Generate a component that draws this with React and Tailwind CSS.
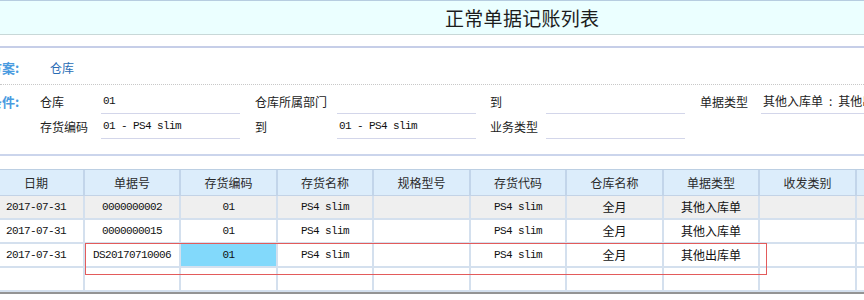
import React from "react";

const cols = [96, 96, 97, 96, 97, 96, 97, 96, 97, 70];
const headers = ["日期", "单据号", "存货编码", "存货名称", "规格型号", "存货代码", "仓库名称", "单据类型", "收发类别", ""];
const rows = [
  { bg: "bg-[#efefef]", cells: ["2017-07-31", "0000000002", "01", "PS4 slim", "", "PS4 slim", "全月", "其他入库单", "", ""] },
  { bg: "bg-white", cells: ["2017-07-31", "0000000015", "01", "PS4 slim", "", "PS4 slim", "全月", "其他入库单", "", ""] },
  { bg: "bg-white", cells: ["2017-07-31", "DS20170710006", "01", "PS4 slim", "", "PS4 slim", "全月", "其他出库单", "", ""], hl: 2 },
  { bg: "bg-white", cells: ["", "", "", "", "", "", "", "", "", ""] },
];
const cjkCols = [6, 7];

const mono = { fontFamily: "'Liberation Mono', 'Noto Sans CJK SC', monospace" };

function Label({ w, children }) {
  return (
    <div className="shrink-0 flex items-center text-[12px] text-[#222] whitespace-nowrap" style={{ width: w }}>
      {children}
    </div>
  );
}

function Input({ w, children }) {
  return (
    <div className="shrink-0 flex items-center h-full border-b border-[#d3d6ea] pl-[2px] text-[11px] tracking-[-0.6px] text-[#111] whitespace-nowrap overflow-hidden" style={{ width: w, ...mono }}>
      {children}
    </div>
  );
}

export default function App() {
  return (
    <div className="relative w-[864px] h-[300px] overflow-hidden bg-white" style={{ fontFamily: "'Noto Sans CJK SC', 'Noto Sans', sans-serif" }}>
      {/* title band */}
      <div className="h-[35px] border-t border-[#b6cde0] border-b border-b-[#c8d8d8] bg-[#ebffff] flex items-center pl-[445px]">
        <span className="text-[19px] leading-none text-[#1c1c1c] tracking-[0.3px]">正常单据记账列表</span>
      </div>
      <div className="h-[11px]" />
      <div className="h-[2px] bg-[#c6cee8]" />

      {/* form */}
      <div className="pt-[12px]">
        <div className="flex items-center h-[16px]">
          <div className="shrink-0 ml-[-11px] w-[61px] text-[13px] font-bold text-[#4a9be0] whitespace-nowrap">方案:</div>
          <div className="shrink-0 text-[12px] text-[#2a6db5] whitespace-nowrap">仓库</div>
        </div>
        <div className="mt-[8px] border-t border-dotted border-[#c8c8c8]" />
        <div className="mt-[4px] flex h-[25px] whitespace-nowrap">
          <div className="shrink-0 ml-[-11px] w-[51px] flex items-center text-[13px] font-bold text-[#4a9be0]">条件:</div>
          <Label w={61}>仓库</Label>
          <Input w={139}>01</Input>
          <div className="shrink-0 w-[15px]" />
          <Label w={82}>仓库所属部门</Label>
          <Input w={139}></Input>
          <div className="shrink-0 w-[14px]" />
          <Label w={56}>到</Label>
          <Input w={139}></Input>
          <div className="shrink-0 w-[15px]" />
          <Label w={61}>单据类型</Label>
          <div className="shrink-0 flex items-center h-full border-b border-[#d3d6ea] pl-[2px] text-[12px] text-[#222] whitespace-nowrap w-[139px] overflow-hidden">
            <span>其他入库单</span>
            <span className="mx-[6px]">:</span>
            <span>其他出库单</span>
          </div>
        </div>
        <div className="flex h-[25px] whitespace-nowrap">
          <div className="shrink-0 w-[40px]" />
          <Label w={61}>存货编码</Label>
          <Input w={139}>01 - PS4 slim</Input>
          <div className="shrink-0 w-[15px]" />
          <Label w={82}>到</Label>
          <Input w={139}>01 - PS4 slim</Input>
          <div className="shrink-0 w-[14px]" />
          <Label w={56}>业务类型</Label>
          <Input w={139}></Input>
        </div>
        <div className="mt-[15px] h-[2px] bg-[#cbd5ec]" />
      </div>

      <div className="h-[13px]" />

      {/* table */}
      <div className="ml-[-11px] w-[960px]">
        <div className="flex h-[27px] bg-[#dcedfb] border-t border-[#bccfe3] border-b border-b-[#c3d3e6]">
          {headers.map((h, i) => (
            <div key={i} className="shrink-0 flex items-center justify-center border-r-2 border-[#c2d5ea] text-[12px] text-[#2a2a2a] whitespace-nowrap" style={{ width: cols[i] }}>
              {h}
            </div>
          ))}
        </div>
        {rows.map((r, ri) => (
          <div key={ri} className={`flex h-[24px] border-b-2 border-[#d4e0ee] ${r.bg}`}>
            {r.cells.map((c, ci) => (
              <div
                key={ci}
                className={`shrink-0 flex items-center justify-center border-r-2 border-[#d4e0ee] whitespace-nowrap text-[#111] ${r.hl === ci ? "bg-[#82d9fb]" : ""} ${cjkCols.includes(ci) ? "text-[12px]" : "text-[11px] tracking-[-0.6px]"}`}
                style={{ width: cols[ci], ...(cjkCols.includes(ci) ? {} : mono) }}
              >
                {c}
              </div>
            ))}
          </div>
        ))}
        <div className="h-[2px] bg-[#949494]" />
      </div>

      {/* red annotation box */}
      <div className="absolute left-[85px] top-[243px] w-[682px] h-[32px] border border-[#e35b5b] pointer-events-none" />
    </div>
  );
}
